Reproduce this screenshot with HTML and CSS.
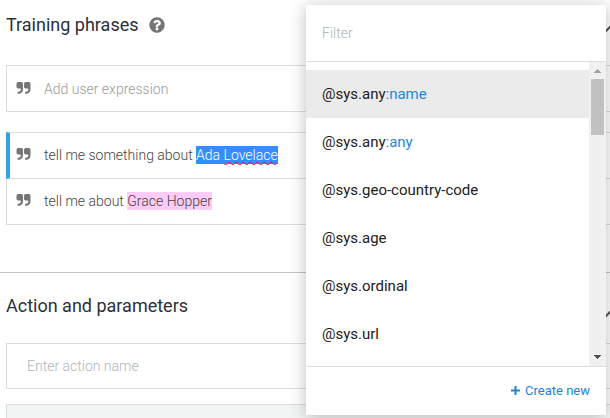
FILE: index.html
```html
<!DOCTYPE html>
<html lang="en">
<head>
<meta charset="utf-8">
<title>Intent editor</title>
<link rel="stylesheet" href="styles.css">
</head>
<body>
<svg class="defs" aria-hidden="true">
  <symbol id="quote" viewBox="0 0 1792 1792"><path d="M832 320v704q0 104-40.500 198.500t-109.500 163.500-163.500 109.500-198.500 40.500h-64q-26 0-45-19t-19-45v-128q0-26 19-45t45-19h64q106 0 181-75t75-181v-32q0-40-28-68t-68-28h-224q-80 0-136-56t-56-136v-384q0-80 56-136t136-56h384q80 0 136 56t56 136zm896 0v704q0 104-40.500 198.500t-109.500 163.500-163.500 109.500-198.500 40.500h-64q-26 0-45-19t-19-45v-128q0-26 19-45t45-19h64q106 0 181-75t75-181v-32q0-40-28-68t-68-28h-224q-80 0-136-56t-56-136v-384q0-80 56-136t136-56h384q80 0 136 56t56 136z"/></symbol>
  <symbol id="chevron" viewBox="0 0 18 12"><path d="M1 10l8-8 8 8" fill="none" stroke="currentColor" stroke-width="2"/></symbol>
</svg>
<main class="page">
  <section class="section training">
    <header class="section-head">
      <h2>Training phrases</h2>
      <svg class="help" viewBox="0 0 1792 1792" role="img" aria-label="Help"><path d="M1024 1376v-192q0-14-9-23t-23-9h-192q-14 0-23 9t-9 23v192q0 14 9 23t23 9h192q14 0 23-9t9-23zm256-672q0-88-55.500-163t-138.500-116-170-41q-243 0-371 213-15 24 8 42l132 100q7 6 19 6 16 0 25-12 53-68 86-92 34-24 86-24 48 0 85.500 26t37.500 59q0 38-20 61t-68 45q-63 28-115.500 86.500t-52.500 125.500v36q0 14 9 23t23 9h192q14 0 23-9t9-23q0-19 21.500-49.500t54.500-49.500q32-18 49-28.500t46-35 44.500-48 28-60.500 12.500-81zm384 192q0 209-103 385.500t-279.500 279.500-385.500 103-385.500-103-279.500-279.500-103-385.500 103-385.500 279.500-279.500 385.500-103 385.500 103 279.500 279.500 103 385.500z"/></svg>
      <svg class="chevron" aria-hidden="true"><use href="#chevron"/></svg>
    </header>
    <label class="phrase">
      <svg class="quote" aria-hidden="true"><use href="#quote"/></svg>
      <input type="text" placeholder="Add user expression" aria-label="Add user expression">
    </label>
    <ul class="phrases">
      <li class="phrase active"><svg class="quote" aria-hidden="true"><use href="#quote"/></svg><p>tell me something about <mark class="selected">Ada <span class="misspelt">Lovelace</span></mark></p></li>
      <li class="phrase"><svg class="quote" aria-hidden="true"><use href="#quote"/></svg><p>tell me about <mark>Grace Hopper</mark></p></li>
    </ul>
  </section>
  <section class="section">
    <header class="section-head">
      <h2>Action and parameters</h2>
      <svg class="chevron" aria-hidden="true"><use href="#chevron"/></svg>
    </header>
    <input class="action" type="text" placeholder="Enter action name" aria-label="Action name">
    <div class="parameters"></div>
  </section>
</main>
<aside class="popup">
  <input class="filter" type="text" placeholder="Filter" aria-label="Filter">
  <div class="listing">
    <ul class="entities">
      <li><button class="current" type="button">@sys.any<span>:name</span></button></li>
      <li><button type="button">@sys.any<span>:any</span></button></li>
      <li><button type="button">@sys.geo-country-code</button></li>
      <li><button type="button">@sys.age</button></li>
      <li><button type="button">@sys.ordinal</button></li>
      <li><button type="button">@sys.url</button></li>
    </ul>
    <div class="scrollbar" aria-hidden="true">
      <svg class="arrow up" viewBox="0 0 7 4" shape-rendering="crispEdges"><path d="M3 0h1v1h1v1h1v1h1v1H0V3h1V2h1V1h1z"/></svg>
      <div class="thumb"></div>
      <svg class="arrow down" viewBox="0 0 7 4" shape-rendering="crispEdges"><path d="M0 0h7v1H6v1H5v1H4v1H3V3H2V2H1V1H0z"/></svg>
    </div>
  </div>
  <footer class="popup-foot">
    <button type="button"><svg class="plus" viewBox="0 0 9 11" aria-hidden="true"><path d="M3.500 0h2v3.500H9v2H5.500V9h-2V5.500H0v-2h3.500z"/></svg>Create new</button>
  </footer>
</aside>
</body>
</html>
```
FILE: styles.css
```css
* { box-sizing: border-box; }

body {
  margin: 0;
  background: #fff;
  color: #444;
  font: 300 14px/20px Roboto, sans-serif;
}

ul, h2, p { margin: 0; padding: 0; list-style: none; }
input, button { font: inherit; border: 0; background: none; padding: 0; outline: 0; }
input::placeholder { color: #9a9a9a; opacity: 1; }
.defs { display: none; }

.page { height: 100vh; overflow: hidden; }

.section { padding: 12px 0 0 6px; }
.training { padding-bottom: 47px; border-bottom: 1px solid #c9c1c1; }
.section + .section { padding-top: 20px; }

.section-head {
  display: flex;
  align-items: center;
  height: 25px;
  margin-bottom: 28px;
}
.section + .section .section-head { margin-bottom: 25px; }
h2 { font-size: 18px; font-weight: 400; line-height: 25px; color: #2b303b; }
.help { width: 18px; height: 18px; margin-left: 9px; fill: #757575; }
.chevron { flex: none; width: 18px; height: 12px; margin: 10px -10px 0 auto; color: #555; }
.section + .section .chevron { margin-top: 18px; }

.phrase {
  display: flex;
  align-items: center;
  gap: 13px;
  height: 47px;
  padding-left: 9px;
  border: 1px solid #dcdfdf;
  border-right: 0;
}
.phrase input { flex: 1; }
.quote { flex: none; width: 15px; height: 15px; fill: #757575; }
.phrases { margin-top: 20px; }
.phrases .phrase { padding-bottom: 2px; }
.phrases .phrase + .phrase { border-top: 0; height: 46px; }
.active { border-left: 4px solid #36a3dd; padding-left: 6px; }

mark { background: #fccbf6; color: inherit; padding: 1px 0; }
.selected { background: #338fff; color: #fff; }
.misspelt {
  text-decoration: underline wavy #e0103a 1px;
  text-decoration-skip-ink: none;
  text-underline-offset: 1px;
}

.action {
  display: block;
  width: 100%;
  height: 46px;
  padding-left: 20px;
  border: 1px solid #dcdfdf;
  border-right: 0;
}
.action::placeholder, .filter::placeholder { color: #b0b4b8; }
.parameters {
  height: 60px;
  margin-top: 15px;
  border: 1px solid #dcdfdf;
  border-right: 0;
  background: #f3f5f5;
}

.popup {
  position: absolute;
  top: 5px;
  right: 4px;
  width: 300px;
  background: #fff;
  box-shadow: 0 2px 16px rgba(0, 0, 0, .26);
}
.filter {
  display: block;
  width: 100%;
  height: 57px;
  padding: 0 16px;
  border-bottom: 1px solid #dedede;
}
.listing { display: flex; height: 304px; overflow: hidden; }
.entities { flex: 1; padding-top: 8px; }
.entities button {
  display: block;
  width: 100%;
  height: 48px;
  padding: 0 16px;
  text-align: left;
  font-size: 15px;
  font-weight: 400;
  color: #212121;
}
.entities .current { background: #ebebeb; }
.entities span { color: #1e88dd; }

.scrollbar {
  display: flex;
  flex-direction: column;
  align-items: center;
  width: 17px;
  padding: 7px 0;
  background: #f0f0f0;
}
.thumb { width: 13px; height: 56px; margin-top: 6px; background: #c1c1c1; }
.arrow { width: 7px; height: 4px; }
.up { fill: #a3a3a3; }
.down { fill: #505050; margin-top: auto; }

.popup-foot {
  display: flex;
  justify-content: flex-end;
  height: 49px;
  padding-right: 16px;
  border-top: 1px solid #dedede;
}
.popup-foot button {
  display: flex;
  align-items: center;
  gap: 5px;
  color: #1a84dc;
  font-size: 13px;
  font-weight: 400;
}
.plus { width: 9px; height: 11px; fill: currentColor; }
```
